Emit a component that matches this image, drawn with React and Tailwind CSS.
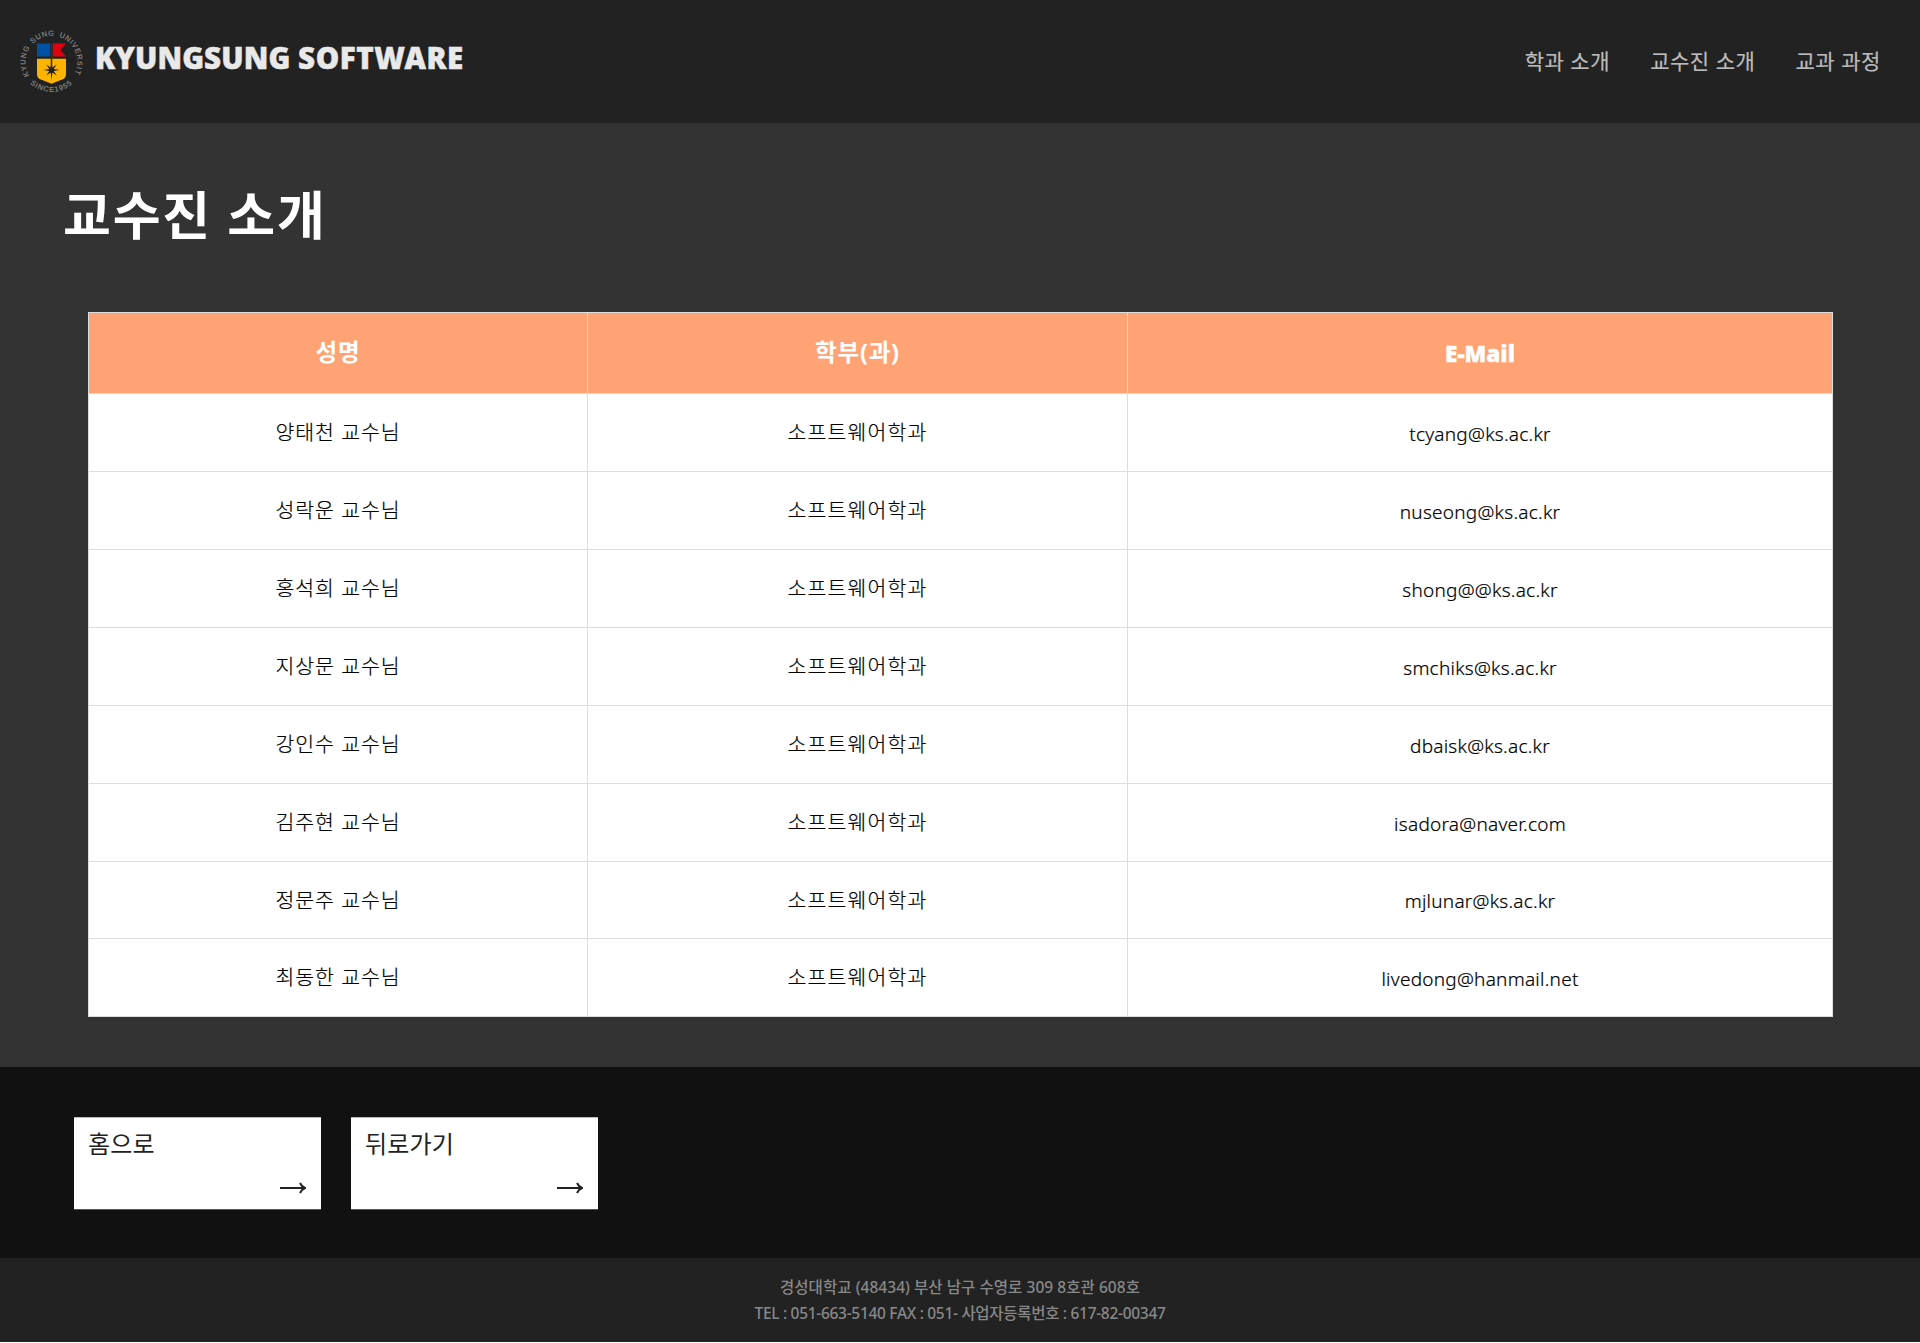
const professors = [
  ["양태천 교수님", "tcyang@ks.ac.kr"],
  ["성락운 교수님", "nuseong@ks.ac.kr"],
  ["홍석희 교수님", "shong@@ks.ac.kr"],
  ["지상문 교수님", "smchiks@ks.ac.kr"],
  ["강인수 교수님", "dbaisk@ks.ac.kr"],
  ["김주현 교수님", "isadora@naver.com"],
  ["정문주 교수님", "mjlunar@ks.ac.kr"],
  ["최동한 교수님", "livedong@hanmail.net"],
];

function Emblem() {
  return (
    <svg className="size-16 shrink-0 overflow-visible" viewBox="0 0 64 64" fill="none">
      <defs>
        <path id="ring-top" d="M9.3 45.3 A26 26 0 1 1 53.7 45.3" />
        <path id="ring-bottom" d="M4.5 46.5 A31.4 31.4 0 0 0 58.5 46.5" />
      </defs>
      <g fill="#8c8c8c" stroke="#8c8c8c" strokeWidth="0.15" fontFamily="'Liberation Sans Narrow', 'Liberation Sans', sans-serif" fontSize="7.2">
        <text textLength="113" lengthAdjust="spacing" wordSpacing="1.2">
          <textPath href="#ring-top" startOffset="0">KYUNG SUNG UNIVERSITY</textPath>
        </text>
        <text textAnchor="middle" letterSpacing="1">
          <textPath href="#ring-bottom" startOffset="50%">SINCE1955</textPath>
        </text>
      </g>
      <path d="M17 13.5H30.2V26.5H17Z" fill="#0050a5" />
      <path d="M32.8 13.5H46L40.3 20L46 26.5H32.8Z" fill="#e1000f" />
      <path d="M17 28.8H46V44Q46 47.9 42.7 49.3L31.5 53.7L20.3 49.3Q17 47.9 17 44Z" fill="#fdb400" />
      <path d="M31.5 13.5V38" stroke="#3a3226" strokeWidth="1.5" />
      <path
        d="M31.5 30.5L32.3 37.5L36.7 34.5L33.7 38.9L39.5 40L33.7 41.1L36.7 45.5L32.3 42.5L31.5 50L30.7 42.5L26.3 45.5L29.3 41.1L23.5 40L29.3 38.9L26.3 34.5L30.7 37.5Z"
        fill="#222"
      />
      <circle cx="31.5" cy="40" r="2.6" fill="#222" />
    </svg>
  );
}

function LinkCard({ label }) {
  return (
    <a className="flex h-[93px] w-[247px] flex-col justify-between border-y border-t-[#bbb] border-b-[#555] bg-white px-[14px] text-[#222]">
      <span className="mt-[8px] text-[24px] leading-9 tracking-[0.2px]">{label}</span>
      <svg className="mr-px mb-[15px] h-3 w-[26px] self-end" viewBox="0 0 26 12" fill="none" stroke="#222" strokeWidth="2">
        <path d="M0 6H25M20 1Q21.5 4.5 25 6Q21.5 7.5 20 11" />
      </svg>
    </a>
  );
}

export default function App() {
  return (
    <div className="h-[1343px] w-full bg-white font-['Noto_Sans','Noto_Sans_CJK_KR',sans-serif]">
      <header className="flex h-[123px] items-center justify-between bg-[#222] pr-[39px] pl-[20px]">
        <div className="flex items-center">
          <Emblem />
          <h1 className="mb-[7px] ml-[11px] text-[29.5px] leading-10 font-black tracking-[0.1px] text-[#e9e9e9] [-webkit-text-stroke:0.5px]">
            KYUNGSUNG <span className="tracking-[0.6px]">SOFTWARE</span>
          </h1>
        </div>
        <nav className="flex gap-[40px] text-[21px] tracking-[0.55px] text-[#bbb] [-webkit-text-stroke:0.2px]">
          <a>학과 소개</a>
          <a>교수진 소개</a>
          <a>교과 과정</a>
        </nav>
      </header>

      <main className="h-[944px] bg-[#333] px-[88px] pt-[48px]">
        <h2 className="-ml-[25px] h-[141px] text-[52px] leading-[88px] font-bold tracking-[1.8px] text-white">교수진 소개</h2>
        <table className="w-[1744px] table-fixed border-collapse bg-white text-center text-black">
          <colgroup>
            <col className="w-[499px]" />
            <col className="w-[540px]" />
            <col className="w-[705px]" />
          </colgroup>
          <thead>
            <tr className="h-[81px] bg-[#ffa374] text-[23.5px] text-white">
              <th className="border border-[#ddd] p-0 font-bold tracking-[0.9px]">성명</th>
              <th className="border border-[#ddd] p-0 font-bold tracking-[0.8px]">학부(과)</th>
              <th className="border border-[#ddd] p-0 pt-[2px] text-[22.5px] font-black [-webkit-text-stroke:0.4px]">E-Mail</th>
            </tr>
          </thead>
          <tbody>
            {professors.map(([name, mail]) => (
              <tr key={name} className="h-[78px] [-webkit-text-stroke:0.2px] nth-7:h-[77px]">
                <td className="border border-[#ddd] p-0 text-[20.5px] font-light tracking-[0.95px]">{name}</td>
                <td className="border border-[#ddd] p-0 text-[20.5px] font-light tracking-[1.15px]">소프트웨어학과</td>
                <td className="border border-[#ddd] p-0 pt-[3px] text-[19px] font-light tracking-[0.25px]">{mail}</td>
              </tr>
            ))}
          </tbody>
        </table>
      </main>

      <section className="flex h-[191px] gap-[30px] bg-[#111] pt-[50px] pl-[74px]">
        <LinkCard label="홈으로" />
        <LinkCard label="뒤로가기" />
      </section>

      <footer className="flex h-[84px] flex-col items-center bg-[#222] pt-[16px] text-[15.5px] leading-[26px] font-medium text-[#888]">
        <p className="tracking-[0.05px]">경성대학교 (48434) 부산 남구 수영로 309 8호관 608호</p>
        <p className="tracking-[-0.3px]">TEL : 051-663-5140 FAX : 051- 사업자등록번호 : 617-82-00347</p>
      </footer>
    </div>
  );
}
